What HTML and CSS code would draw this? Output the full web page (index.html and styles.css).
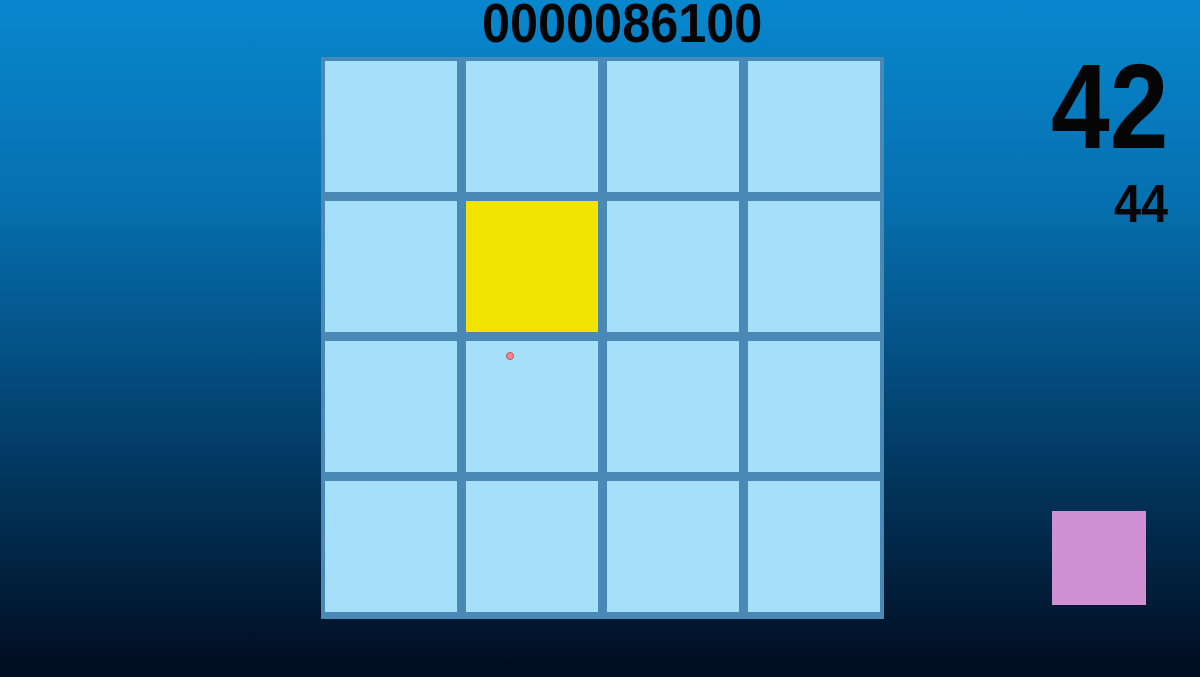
FILE: index.html
```html
<!DOCTYPE html>
<html>
<head>
<meta charset="utf-8">
<link rel="stylesheet" href="styles.css">
</head>
<body>
<div class="app">
  <div class="main">
    <div class="score"><span class="score-text">0000086100</span></div>
    <div class="board">
      <div class="cell"></div><div class="cell"></div><div class="cell"></div><div class="cell"></div>
      <div class="cell"></div><div class="cell lit"></div><div class="cell"></div><div class="cell"></div>
      <div class="cell"></div><div class="cell"><span class="dot"></span></div><div class="cell"></div><div class="cell"></div>
      <div class="cell"></div><div class="cell"></div><div class="cell"></div><div class="cell"></div>
    </div>
  </div>
  <div class="side">
    <div class="big">42</div>
    <div class="small">44</div>
    <div class="swatch"></div>
  </div>
</div>
</body>
</html>
```
FILE: styles.css
```css
html, body {
  margin: 0;
  padding: 0;
}
body {
  width: 1200px;
  height: 677px;
  overflow: hidden;
  font-family: "Liberation Sans", Arial, sans-serif;
  background: linear-gradient(to bottom, #0887ce 0px, #0670b0 200px, #045388 340px, #02355c 480px, #010f24 660px, #010d20 677px);
}
.app {
  display: flex;
  height: 677px;
}
.main {
  margin-left: 321px;
  width: 563px;
  display: flex;
  flex-direction: column;
}
.score {
  height: 46px;
  line-height: 46px;
  font-size: 56px;
  font-weight: bold;
  color: #050505;
  padding-left: 161px;
  white-space: nowrap;
}
.score-text {
  display: inline-block;
  transform: scaleX(0.9);
  transform-origin: left center;
}
.board {
  margin-top: 11px;
  box-sizing: border-box;
  width: 563px;
  height: 562px;
  background: #4a89b6;
  padding: 4px;
  display: grid;
  grid-template-columns: repeat(4, 132px);
  grid-template-rows: repeat(4, 131px);
  column-gap: 9px;
  row-gap: 9px;
}
.cell {
  background: #a6dffa;
  position: relative;
}
.cell.lit {
  background: #f0e400;
}
.dot {
  position: absolute;
  left: 40px;
  top: 11px;
  width: 6px;
  height: 6px;
  border-radius: 50%;
  background: #f28a8a;
  border: 1px solid #c05060;
}
.side {
  flex: 1;
  display: flex;
  flex-direction: column;
  align-items: flex-end;
  padding-right: 32px;
  padding-bottom: 72px;
}
.big {
  margin-top: 46px;
  font-size: 120px;
  line-height: 120px;
  font-weight: bold;
  color: #050505;
  transform: scaleX(0.88);
  transform-origin: right center;
}
.small {
  margin-top: 10px;
  font-size: 54px;
  line-height: 54px;
  font-weight: bold;
  color: #050505;
  transform: scaleX(0.9);
  transform-origin: right center;
}
.swatch {
  margin-top: auto;
  margin-right: 22px;
  width: 94px;
  height: 94px;
  background: #d18fd4;
}
```
